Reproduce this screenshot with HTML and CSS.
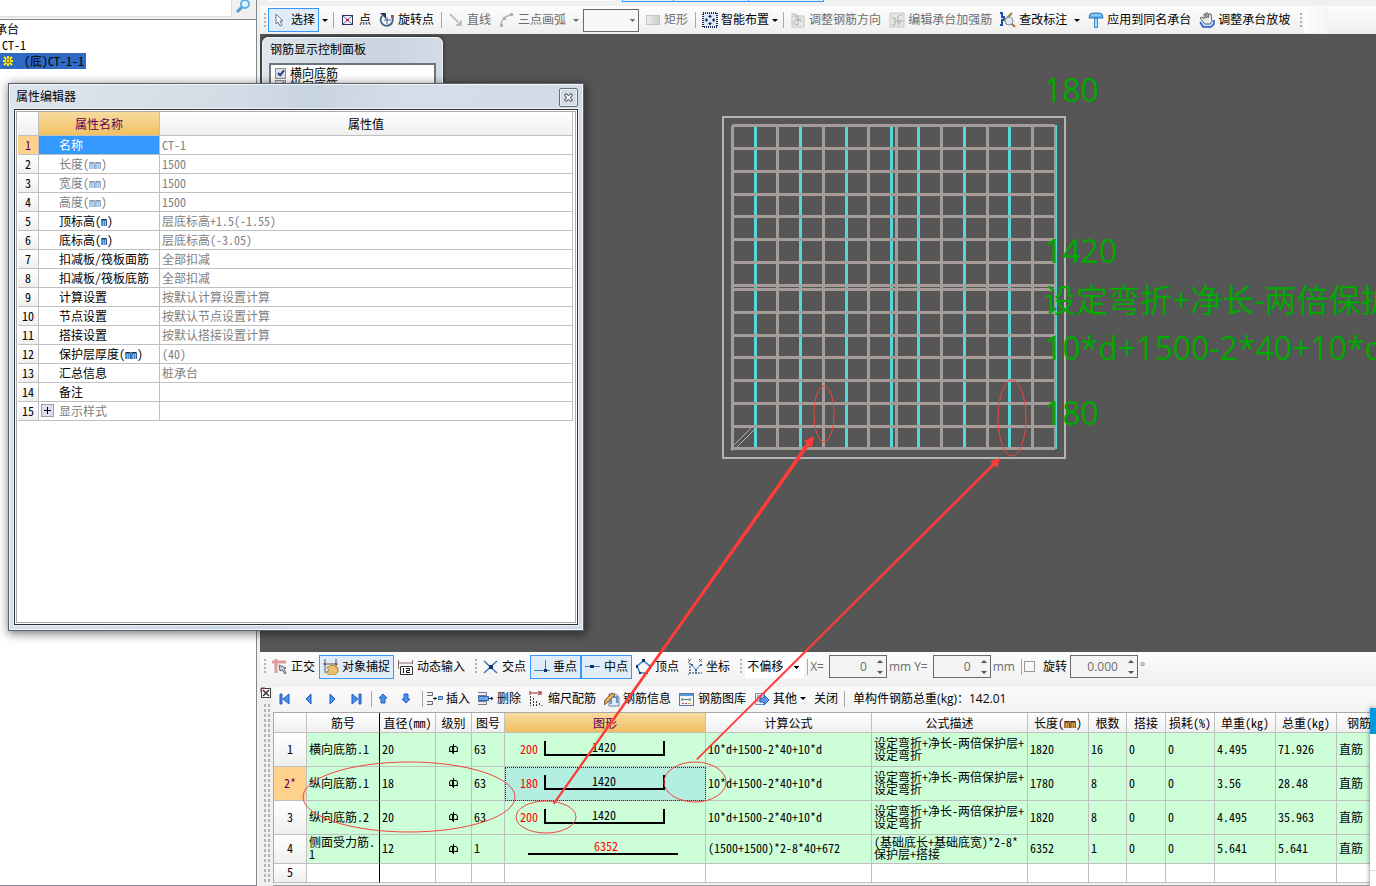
FILE: index.html
```html
<!DOCTYPE html>
<html lang="zh-CN">
<head>
    <meta charset="UTF-8">
    <title>承台钢筋</title>
    <link rel="stylesheet" href="styles.css">
</head>
<body>
<aside class="sidebar">
    <div class="search">
        <input type="text" aria-label="搜索构件">
        <button type="button" aria-label="搜索">
            <svg width="16" height="16" viewBox="0 0 16 16"><path d="M6 9L1 14" stroke="#4f9ad8" stroke-width="3"/><circle cx="9" cy="6" r="4" fill="#e4f6ff" stroke="#5cb4e8" stroke-width="2"/></svg>
        </button>
    </div>
    <ul class="tree">
        <li class="root">承台</li>
        <li>CT-1</li>
        <li class="current">
            <svg width="12" height="12" viewBox="0 0 12 12"><path d="M6 1v10M1 6h10M2 2l8 8M10 2l-8 8" stroke="#ffee00" stroke-width="2"/><circle cx="6" cy="6" r="3" fill="#ffee00"/><circle cx="6" cy="6" r="2" fill="none" stroke="#555" stroke-width="1"/></svg>
            <span>(底)CT-1-1</span>
        </li>
    </ul>
</aside>

<main class="main">
    <div class="strip"><i></i><i></i><i></i></div>
    <!-- 绘图工具栏 -->
    <div class="bar">
        <span class="grip"></span>
        <button class="tool on"><svg width="16" height="16" viewBox="0 0 16 16"><path d="M4 2v10l2-2 2 4 2-1-2-4h3z" fill="#fff" stroke="#6a7684"/></svg>选择</button>
        <button class="arrow" aria-label="选择方式"></button>
        <span class="sep"></span>
        <button class="tool"><svg width="16" height="16" viewBox="0 0 16 16"><rect x="2.500" y="3.500" width="10" height="9" fill="#eef4ff" stroke="#26365e"/><path d="M3 4l9 8M12 4l-9 8" stroke="#5570b0"/><path d="M6 8h3M7.500 7v2" stroke="#e02030" stroke-width="2"/></svg>点</button>
        <button class="tool"><svg width="16" height="16" viewBox="0 0 16 16"><path d="M3 4a6 6 0 1 0 10 1" fill="none" stroke="#45688c" stroke-width="2"/><path d="M1 1h6v6z" fill="#1c3e68"/><path d="M8 5v7M5 8h7" stroke="#3c6290"/><path d="M12 3h3v3h-3z" fill="#b0525c"/></svg>旋转点</button>
        <span class="sep"></span>
        <button class="tool off"><svg width="16" height="16" viewBox="0 0 16 16"><path d="M2 2l11 11M13 8v5H8" fill="none" stroke="#b4b4b4" stroke-width="1.500"/></svg>直线</button>
        <button class="tool off"><svg width="16" height="16" viewBox="0 0 16 16"><path d="M2 14Q2 4 13 3" fill="none" stroke="#b4b4b4" stroke-width="1.500"/><path d="M1 12h3v3H1zM4 5h3v3H4zM11 1h3v3h-3z" fill="#b0b0b0"/></svg>三点画弧</button>
        <button class="arrow off" aria-label="画弧方式"></button>
        <select class="combo" aria-label="半径"><option></option></select>
        <button class="tool off"><svg width="16" height="16" viewBox="0 0 16 16"><defs><linearGradient id="g1"><stop offset="0" stop-color="#eee"/><stop offset="1" stop-color="#ccc"/></linearGradient></defs><rect x="1.500" y="3.500" width="13" height="9" fill="url(#g1)" stroke="#c4c4c4"/></svg>矩形</button>
        <span class="sep"></span>
        <button class="tool menu"><svg width="16" height="16" viewBox="0 0 16 16"><rect x="1" y="1" width="14" height="14" fill="#dbe8fa" stroke="#1a2a50" stroke-width="2" stroke-dasharray="1 1"/><path d="M8 3v3M8 10v3M3 8h3M10 8h3" stroke="#102040"/><path d="M6 5h4L8 3zM6 11h4l-2 2zM5 6v4L3 8zM11 6v4l2-2z" fill="#102040"/></svg>智能布置</button>
        <button class="arrow" aria-label="布置方式"></button>
        <span class="sep"></span>
        <button class="tool off"><svg width="16" height="16" viewBox="0 0 16 16"><path d="M2 4h12v11H2z" fill="#e8e8e8" stroke="#c4c4c4"/><path d="M1 2h5v4q0 2 5 1M8 3v10q-4 0-4-3 0-2 4-2t4 2" fill="none" stroke="#b0b0b0"/></svg>调整钢筋方向</button>
        <button class="tool off"><svg width="16" height="16" viewBox="0 0 16 16"><path d="M1 1h14v14H1z" fill="#e6e6e6" stroke="#c8c8c8"/><path d="M3 6h3v7H3M6 9h8M9 13V5q0-2 4-2M11 9v4" fill="none" stroke="#b0b0b0"/></svg>编辑承台加强筋</button>
        <button class="tool"><svg width="16" height="16" viewBox="0 0 16 16"><path d="M0 1h2v4h2v3H2v5H0" fill="none" stroke="#1a50b0" stroke-width="2"/><path d="M12 1L4 9" stroke="#a08030" stroke-width="2"/><circle cx="9" cy="9" r="4" fill="#d8ecf8" stroke="#888"/><path d="M12 12l3 3" stroke="#c06828" stroke-width="2"/></svg>查改标注</button>
        <button class="arrow" aria-label="标注方式"></button>
        <span class="gap"></span>
        <button class="tool"><svg width="16" height="16" viewBox="0 0 16 16"><path d="M2 2q0-1 6-1t6 1l1 4H1z" fill="#62b4ec" stroke="#2878bc"/><path d="M3 3h10" stroke="#b4e0ff"/><path d="M6.500 6.500h3v9h-3z" fill="#a8dcf8" stroke="#3888c4"/></svg>应用到同名承台</button>
        <button class="tool"><svg width="16" height="16" viewBox="0 0 16 16"><path d="M1 10l3 5h8l3-3V8" fill="#c0d8ff" stroke="#2458c0" stroke-width="1.500"/><path d="M5 11L1 6l2-1 2 2V2h2v4-5h2v5l1-4h2l1 7-2 3H6z" fill="#ececec" stroke="#666"/></svg>调整承台放坡</button>
        <span class="grip"></span>
        <span class="bar-end"></span>
    </div>

    <!-- 绘图区 -->
    <div class="canvas">
        <svg class="drawing" width="1116" height="618" viewBox="260 34 1116 618">
            <rect class="outline" x="723" y="117" width="342" height="341"/>
            <path class="bar-x" d="M755.500 126v321M800.500 126v321M846.500 126v321M891.500 126v321M918.500 126v321M964.500 126v321M1009.500 126v321"/>
            <path class="bar-x thin" d="M1056.500 125v324"/>
            <path class="bar-y" d="M732.500 126v324M777.500 126v322M823.500 126v322M868.500 126v322M896.500 126v322M941.500 126v322M987.500 126v322M1032.500 126v322"/>
            <path class="bar-y end" d="M1055 125v324"/>
            <path class="bar-y" d="M732 125.500h323M732 148.500h323M732 171.500h323M732 194.500h323M732 216.500h323M732 239.500h323M732 262.500h323M732 285.500h323M732 289.500h323M732 312.500h323M732 335.500h323M732 357.500h323M732 380.500h323M732 403.500h323M732 426.500h323M731 448.500h324"/>
            <path class="hook" d="M733 446l18-18M737 447l18-18M732 445v6"/>
            <g class="dims">
                <text x="1044" y="102">180</text>
                <text x="1044" y="263">1420</text>
                <text x="1044" y="312">设定弯折+净长-两倍保护层+设定弯折</text>
                <text x="1044" y="360">10*d+1500-2*40+10*d</text>
                <text x="1044" y="425">180</text>
            </g>
        </svg>
        <section class="panel">
            <h2>钢筋显示控制面板</h2>
            <div class="panel-list">
                <label><input type="checkbox" checked>横向底筋</label>
                <label><input type="checkbox" checked>纵向底筋</label>
            </div>
        </section>
    </div>

    <!-- 捕捉工具栏 -->
    <div class="bar snap">
        <span class="grip"></span>
        <button class="tool"><svg width="16" height="16" viewBox="0 0 16 16"><path d="M0 3h14M4 0v14" stroke="#dc9c9c" stroke-width="3"/><path d="M7 6l1 6 2-1 3 4 1-1-2-4 2-1z" fill="#c8d0d8" stroke="#5a6a7c"/></svg>正交</button>
        <button class="tool on"><svg width="16" height="16" viewBox="0 0 16 16"><path d="M2 0v14M13 0v9M0 5h15" stroke="#555"/><path d="M1 4l2 2M12 4l2 2" stroke="#d02020"/><path d="M4 8l6-2 5 3v4l-4 3H6l-3-3 3-1z" fill="#e8c070" stroke="#b08838"/></svg>对象捕捉</button>
        <button class="tool"><svg width="16" height="16" viewBox="0 0 16 16"><path d="M0 4h15M.5 1v9M14.500 1v4" stroke="#8a6a6a" fill="none"/><path d="M2.500 7.500h12v8h-12z" fill="#fff" stroke="#333"/><path d="M5.500 9v5M8 9.500h3.500v2h-3v2H12" fill="none" stroke="#111"/></svg>动态输入</button>
        <span class="grip"></span>
        <button class="tool"><svg width="16" height="16" viewBox="0 0 16 16"><path d="M1 2l13 12M14 2L1 14" stroke="#3a78b4" stroke-width="1.500"/><path d="M6 6h4v4H6z" fill="#103468"/></svg>交点</button>
        <button class="tool on"><svg width="16" height="16" viewBox="0 0 16 16"><path d="M0 11.500h16M11.500 1v11" stroke="#3a80c4"/><path d="M10 10h3v3h-3z" fill="#103468"/></svg>垂点</button>
        <button class="tool on"><svg width="16" height="16" viewBox="0 0 16 16"><path d="M0 7.500h15" stroke="#3a80c4"/><path d="M5 6h4v3H5z" fill="#103468"/></svg>中点</button>
        <button class="tool"><svg width="16" height="16" viewBox="0 0 16 16"><path d="M7.500 2L14 7l-3 7H4L1 7z" fill="none" stroke="#3a80c4" stroke-width="1.500"/><path d="M6 0h3v3H6zM0 6h2v3H0zM13 6h2v3h-2zM3 13h2v2H3zM10 13h2v2h-2z" fill="#103468"/></svg>顶点</button>
        <button class="tool"><svg width="16" height="16" viewBox="0 0 16 16"><path d="M3 14l-2 2M5 6l4 5 5-6M9 11v4" fill="none" stroke="#3a80c4"/><path d="M3 4v10h12" fill="none" stroke="#234" stroke-dasharray="2 1"/><path d="M1 0l2 2M4 0L1 4M12 0l3 3M15 0l-3 3" stroke="#567"/><path d="M8 10h2v2H8zM4 5h2v2H4zM13 5h2v2h-2z" fill="#2468a8"/></svg>坐标</button>
        <span class="grip"></span>
        <select class="offset" aria-label="偏移方式"><option>不偏移</option></select>
        <span class="sep"></span>
        <label class="num">X=<span class="spin"><input type="text" value="0"><i></i></span>mm</label>
        <label class="num">Y=<span class="spin"><input type="text" value="0"><i></i></span>mm</label>
        <span class="sep"></span>
        <label class="rotate"><input type="checkbox">旋转</label>
        <span class="spin wide"><input type="text" value="0.000" aria-label="旋转角度"><i></i></span>
        <span class="degree">°</span>
    </div>

    <!-- 编辑钢筋 -->
    <div class="rebar">
        <div class="dock">
            <button type="button" aria-label="关闭停靠窗口"><svg width="12" height="12" viewBox="0 0 12 12"><rect x="1.500" y="1.500" width="9" height="9" fill="#fff" stroke="#444"/><path d="M3 3l6 6M9 3L3 9" stroke="#333" stroke-width="1.500"/><path d="M1 1h4M1 1v4" stroke="#a03030"/></svg></button>
            <div class="dots"></div>
        </div>
        <div class="rebar-body">
            <div class="bar edit">
                <button class="tool" aria-label="首行"><svg width="16" height="16" viewBox="0 0 16 16"><path d="M3 3h2v10H3zM12 3v10L6 8z" fill="#4c90ee" stroke="#1e5cc8"/></svg></button>
                <button class="tool" aria-label="上一行"><svg width="16" height="16" viewBox="0 0 16 16"><path d="M10 3v10L5 8z" fill="#4c90ee" stroke="#1e5cc8"/></svg></button>
                <button class="tool" aria-label="下一行"><svg width="16" height="16" viewBox="0 0 16 16"><path d="M5 3v10l5-5z" fill="#4c90ee" stroke="#1e5cc8"/></svg></button>
                <button class="tool" aria-label="末行"><svg width="16" height="16" viewBox="0 0 16 16"><path d="M10 3h2v10h-2zM3 3v10l6-5z" fill="#4c90ee" stroke="#1e5cc8"/></svg></button>
                <span class="sep"></span>
                <button class="tool" aria-label="上移"><svg width="16" height="16" viewBox="0 0 16 16"><path d="M7 3l4 4H9v5H5V7H3z" fill="#4c90ee" stroke="#1e5cc8"/></svg></button>
                <button class="tool" aria-label="下移"><svg width="16" height="16" viewBox="0 0 16 16"><path d="M6 12l4-4H8V3H4v5H2z" fill="#4c90ee" stroke="#1e5cc8"/></svg></button>
                <span class="sep"></span>
                <button class="tool"><svg width="16" height="16" viewBox="0 0 16 16"><path d="M0 1.500h5.500v3H0M0 10.500h5.500v3H0" fill="#eaf0f6" stroke="#667"/><path d="M6 7.500h4M8 6v3" stroke="#222"/><path d="M11.500 5.500h4v3h-4z" fill="#9cc4f4" stroke="#3a68a8"/></svg>插入</button>
                <button class="tool"><svg width="16" height="16" viewBox="0 0 16 16"><path d="M0 1.500h8.500v3H0M0 10.500h8.500v3H0" fill="#eaf0f6" stroke="#778"/><path d="M.5 5.500h10v4H.5z" fill="#6aa8ec" stroke="#3a68a8"/><path d="M11 7.500h4M13 6l2 1.500L13 9" stroke="#222" fill="none"/></svg>删除</button>
                <button class="tool"><svg width="16" height="16" viewBox="0 0 16 16"><path d="M1 2h11" stroke="#a02828"/><path d="M1 0v4M12 0v4M9 0l3 2-3 2" stroke="#a02828" fill="none"/><path d="M1.500 5v10M4.500 7v8M7.500 10v5M10.500 12v3M13 14v1" stroke="#334" stroke-dasharray="2 1"/></svg>缩尺配筋</button>
                <button class="tool"><svg width="16" height="16" viewBox="0 0 16 16"><path d="M5 3h7l3 3v9H5z" fill="#dceafa" stroke="#6884a8"/><path d="M7 13V6M9 6h4v6" fill="none" stroke="#4878b0" stroke-width="1.500"/><path d="M0 14L1 9l7-7 3 2-7 7z" fill="#e0b060" stroke="#7a5a30"/></svg>钢筋信息</button>
                <button class="tool"><svg width="16" height="16" viewBox="0 0 16 16"><rect x=".5" y="2.500" width="14" height="12" fill="#eef4fb" stroke="#5a7898"/><path d="M1 4h13" stroke="#5898e0" stroke-width="2"/><path d="M3 10V7M3 8.500h8M11 7v3" fill="none" stroke="#777"/><path d="M3 12.500h2M6 12.500h2" stroke="#d04040"/><path d="M9 12.500h3" stroke="#d0b030"/></svg>钢筋图库</button>
                <button class="tool menu"><svg width="16" height="16" viewBox="0 0 16 16"><path d="M1.500 2.500h9v11h-9z" fill="#e8f0fa" stroke="#7890b0"/><path d="M3 5h5M3 7h3M3 10h3" stroke="#778"/><path d="M6 7h4V4l5 5-5 5v-3H6z" fill="#5a98ec" stroke="#2458b0"/></svg>其他</button>
                <button class="arrow" aria-label="其他操作"></button>
                <button class="tool">关闭</button>
                <span class="sep"></span>
                <span class="total">单构件钢筋总重(kg)：142.01</span>
            </div>
            <table class="grid bars">
                <colgroup>
                    <col class="c-no"><col class="c-name"><col class="c-dia"><col class="c-level"><col class="c-fig"><col class="c-shape"><col class="c-formula"><col class="c-desc"><col class="c-wide"><col class="c-count"><col class="c-lap"><col class="c-loss"><col class="c-wide"><col class="c-wide"><col>
                </colgroup>
                <thead>
                <tr><th></th><th>筋号</th><th>直径(mm)</th><th>级别</th><th>图号</th><th class="hot">图形</th><th>计算公式</th><th>公式描述</th><th>长度(mm)</th><th>根数</th><th>搭接</th><th>损耗(%)</th><th>单重(kg)</th><th>总重(kg)</th><th class="last">钢筋</th></tr>
                </thead>
                <tbody>
                <tr>
                    <th>1</th><td>横向底筋.1</td><td>20</td>
                    <td class="level"><svg width="11" height="11" viewBox="0 0 11 11"><path d="M5.500 0v10M1 7.500h9M5 2.500H3q-1.500 0-1.500 2.500T3 7.500M6 2.500h2q1.500 0 1.500 2.500T8 7.500M4.500 9V2" fill="none" stroke="#000"/></svg></td>
                    <td>63</td>
                    <td class="shape"><svg width="200" height="33" viewBox="0 0 200 33"><path d="M40 8v14h119V8"/><text class="red" x="15" y="21">200</text><text x="87" y="19">1420</text></svg></td>
                    <td>10*d+1500-2*40+10*d</td><td>设定弯折+净长-两倍保护层+<br>设定弯折</td><td>1820</td><td>16</td><td>0</td><td>0</td><td>4.495</td><td>71.926</td><td>直筋</td>
                </tr>
                <tr>
                    <th class="hot">2*</th><td>纵向底筋.1</td><td>18</td>
                    <td class="level"><svg width="11" height="11" viewBox="0 0 11 11"><path d="M5.500 0v10M1 7.500h9M5 2.500H3q-1.500 0-1.500 2.500T3 7.500M6 2.500h2q1.500 0 1.500 2.500T8 7.500M4.500 9V2" fill="none" stroke="#000"/></svg></td>
                    <td>63</td>
                    <td class="shape picked"><svg width="200" height="33" viewBox="0 0 200 33"><path d="M40 8v14h119V8"/><text class="red" x="15" y="21">180</text><text x="87" y="19">1420</text></svg></td>
                    <td>10*d+1500-2*40+10*d</td><td>设定弯折+净长-两倍保护层+<br>设定弯折</td><td>1780</td><td>8</td><td>0</td><td>0</td><td>3.56</td><td>28.48</td><td>直筋</td>
                </tr>
                <tr>
                    <th>3</th><td>纵向底筋.2</td><td>20</td>
                    <td class="level"><svg width="11" height="11" viewBox="0 0 11 11"><path d="M5.500 0v10M1 7.500h9M5 2.500H3q-1.500 0-1.500 2.500T3 7.500M6 2.500h2q1.500 0 1.500 2.500T8 7.500M4.500 9V2" fill="none" stroke="#000"/></svg></td>
                    <td>63</td>
                    <td class="shape"><svg width="200" height="33" viewBox="0 0 200 33"><path d="M40 8v14h119V8"/><text class="red" x="15" y="21">200</text><text x="87" y="19">1420</text></svg></td>
                    <td>10*d+1500-2*40+10*d</td><td>设定弯折+净长-两倍保护层+<br>设定弯折</td><td>1820</td><td>8</td><td>0</td><td>0</td><td>4.495</td><td>35.963</td><td>直筋</td>
                </tr>
                <tr class="short">
                    <th>4</th><td>侧面受力筋.<br>1</td><td>12</td>
                    <td class="level"><svg width="11" height="11" viewBox="0 0 11 11"><path d="M5.500 0v10M1 7.500h9M5 2.500H3q-1.500 0-1.500 2.500T3 7.500M6 2.500h2q1.500 0 1.500 2.500T8 7.500M4.500 9V2" fill="none" stroke="#000"/></svg></td>
                    <td>1</td>
                    <td class="shape"><svg width="200" height="28" viewBox="0 0 200 28"><path d="M23 19h150"/><text class="red" x="89" y="16">6352</text></svg></td>
                    <td>(1500+1500)*2-8*40+672</td><td>(基础底长+基础底宽)*2-8*<br>保护层+搭接</td><td>6352</td><td>1</td><td>0</td><td>0</td><td>5.641</td><td>5.641</td><td>直筋</td>
                </tr>
                <tr class="blank"><th>5</th><td></td><td></td><td></td><td></td><td></td><td></td><td></td><td></td><td></td><td></td><td></td><td></td><td></td><td></td></tr>
                </tbody>
            </table>
        </div>
    </div>
</main>

<!-- 属性编辑器 -->
<section class="dialog">
    <header>
        <h2>属性编辑器</h2>
        <button type="button" aria-label="关闭"><svg width="9" height="9" viewBox="0 0 9 9"><path d="M1 1h2l1.500 2L6 1h2v2L6 4.500 8 6v2H6L4.500 6 3 8H1V6l2-1.500L1 3z" fill="#fff" stroke="#444a58"/></svg></button>
    </header>
    <div class="dialog-body">
        <table class="grid props">
            <colgroup><col class="p-no"><col class="p-name"><col></colgroup>
            <thead>
            <tr><th></th><th class="hot">属性名称</th><th>属性值</th></tr>
            </thead>
            <tbody>
            <tr><th class="hot">1</th><td class="picked">名称</td><td>CT-1</td></tr>
            <tr><th>2</th><td class="gray">长度(mm)</td><td>1500</td></tr>
            <tr><th>3</th><td class="gray">宽度(mm)</td><td>1500</td></tr>
            <tr><th>4</th><td class="gray">高度(mm)</td><td>1500</td></tr>
            <tr><th>5</th><td>顶标高(m)</td><td>层底标高+1.5(-1.55)</td></tr>
            <tr><th>6</th><td>底标高(m)</td><td>层底标高(-3.05)</td></tr>
            <tr><th>7</th><td>扣减板/筏板面筋</td><td>全部扣减</td></tr>
            <tr><th>8</th><td>扣减板/筏板底筋</td><td>全部扣减</td></tr>
            <tr><th>9</th><td>计算设置</td><td>按默认计算设置计算</td></tr>
            <tr><th>10</th><td>节点设置</td><td>按默认节点设置计算</td></tr>
            <tr><th>11</th><td>搭接设置</td><td>按默认搭接设置计算</td></tr>
            <tr><th>12</th><td>保护层厚度(mm)</td><td>(40)</td></tr>
            <tr><th>13</th><td>汇总信息</td><td>桩承台</td></tr>
            <tr><th>14</th><td>备注</td><td></td></tr>
            <tr><th>15</th><td class="gray fold"><div><button type="button" aria-label="展开"><svg width="11" height="11" viewBox="0 0 11 11"><path d="M2 5.500h7M5.500 2v7" stroke="#000"/></svg></button>显示样式</div></td><td></td></tr>
            </tbody>
        </table>
    </div>
</section>

<div class="side-tab"></div>

<!-- 红色标注 -->
<svg class="marks" width="1376" height="886" viewBox="0 0 1376 886">
    <g class="rings">
        <ellipse cx="824" cy="414" rx="10" ry="28"/>
        <ellipse cx="1012" cy="418" rx="14" ry="38"/>
        <ellipse cx="409" cy="797" rx="106" ry="35"/>
        <ellipse cx="546" cy="817" rx="30" ry="16"/>
        <ellipse cx="695" cy="782" rx="31" ry="20"/>
    </g>
    <path d="M553 803L806.500 443L804 441L814 436L812 448L809 446L554.500 804.500z"/>
    <path d="M696 759L992.500 463.500L990 461L1000 458L997 468L994.500 465.500L697.500 760z"/>
</svg>
</body>
</html>
```
FILE: styles.css
```css
* {
    margin: 0;
    padding: 0;
    box-sizing: border-box;
}
body{
    display: flex;
    height: 100vh;
    overflow: hidden;
    background-color: #f0f0f0;
    font: 12px/16px "Open Sans", "Noto Sans CJK SC", sans-serif;
    color: #000;
}
button, input, select{
    font: inherit;
    color: inherit;
    border: 0;
    background: none;
    appearance: none;
}
svg{
    display: block;
    flex: none;
}
h2{
    font-size: 12px;
    font-weight: normal;
}

/* 左侧构件树 */
.sidebar{
    width: 257px;
    flex: none;
    display: flex;
    flex-direction: column;
    border-right: 1px solid #828790;
    border-bottom: 1px solid #828790;
}
.search{
    display: flex;
    height: 19px;
    padding-bottom: 2px;
}
.search input{
    flex: 1;
    min-width: 0;
    background-color: #fff;
    border-right: 1px solid #ddd;
    border-bottom: 1px solid #ddd;
}
.search button{
    width: 24px;
    padding-left: 4px;
    overflow: hidden;
}
.search svg{
    margin-top: -5px;
}
.tree{
    flex: 1;
    padding-top: 1px;
    background-color: #fff;
    border-top: 1px solid #828790;
    list-style: none;
    font-family: "Noto Sans Mono CJK SC", "Noto Sans CJK SC", sans-serif;
}
.tree li{
    height: 16px;
    padding-left: 2px;
}
.tree .root{
    text-indent: -7px;
}
.tree .current{
    display: flex;
    align-items: center;
    gap: 10px;
    width: 86px;
    background-color: #316ac5;
}

/* 工具栏 */
.main{
    flex: 1;
    min-width: 0;
    margin-left: 3px;
    display: flex;
    flex-direction: column;
}
.strip{
    display: flex;
    height: 6px;
    padding-left: 362px;
    background: linear-gradient(#fff, #fff) no-repeat 8px 0 / 346px 1px;
}
.strip i{
    width: 76px;
    height: 2px;
    margin-right: -1px;
    border: 1px solid #3399ff;
    border-top: 0;
    background-color: #e5effa;
}
.strip i:first-child{
    width: 52px;
}
.bar{
    display: flex;
    align-items: center;
    height: 28px;
    flex: none;
    white-space: nowrap;
    background: linear-gradient(#fdfdfd, #efefef);
}
.tool{
    display: flex;
    align-items: center;
    gap: 3px;
    height: 24px;
    padding: 0 4px;
    flex: none;
}
.tool.menu{
    padding-right: 0;
}
.tool.on{
    padding: 0 3px;
    border: 1px solid #3399ff;
    background-color: #e1ecf9;
}
.off{
    color: #6d6d6d;
}
.arrow{
    width: 11px;
    height: 20px;
    flex: none;
}
.arrow::before{
    content: "";
    display: block;
    margin: 0 auto;
    width: 0;
    border: 3px solid transparent;
    border-top-color: currentColor;
    border-bottom: 0;
}
.gap{
    width: 2px;
}
.sep{
    width: 1px;
    height: 16px;
    margin: 0 2px 0 3px;
    flex: none;
    background-color: #a8a8a8;
}
.grip{
    width: 10px;
    height: 15px;
    flex: none;
    background: repeating-linear-gradient(#b0b0b0 0 2px, transparent 2px 4px) no-repeat 6px 0 / 2px 15px;
}
.grip:first-child{
    width: 8px;
    background-position: 4px 0;
}
.bar-end{
    width: 24px;
    height: 26px;
    background: linear-gradient(90deg, #fefefe, #f4f4f4);
}
.combo{
    width: 56px;
    height: 23px;
    margin: 0 2px;
    border: 1px solid #6a6a6a;
    background: linear-gradient(#777, #777) no-repeat 46px 9px / 5px 1px, linear-gradient(#777, #777) no-repeat 47px 10px / 3px 1px, linear-gradient(#777, #777) no-repeat 48px 11px / 1px 1px, #f7f7f7;
}

/* 绘图区 */
.canvas{
    position: relative;
    flex: 1;
    min-height: 0;
    overflow: hidden;
    background-color: #565656;
}
.drawing{
    position: absolute;
    left: 0;
    top: 0;
}
.outline{
    fill: none;
    stroke: #b4b4b4;
    stroke-width: 2;
}
.bar-x{
    stroke: #52d8d8;
    stroke-width: 3;
}
.bar-y{
    stroke: #a49c98;
    stroke-width: 3;
}
.end{
    stroke-width: 2;
}
.thin{
    stroke-width: 1;
}
.hook{
    stroke: #b4aca8;
    stroke-width: 1;
}
.dims{
    fill: #00a800;
    font-size: 32px;
}
.panel{
    position: absolute;
    left: 2px;
    top: 3px;
    width: 181px;
    height: 120px;
    padding: 4px 6px;
    border: 1px solid #f4f7fa;
    border-radius: 6px 6px 0 0;
    background: linear-gradient(100deg, #dfe6ee, #c9d4df 60%, #d6dee8);
    box-shadow: 0 0 3px 1px #333;
}
.panel h2{
    height: 21px;
    padding-left: 1px;
}
.panel-list{
    height: 90px;
    padding: 2px 4px;
    border: 2px solid #70747c;
    background-color: #fff;
}
.panel-list label{
    display: flex;
    align-items: center;
    gap: 4px;
    height: 12px;
    font-family: "Noto Sans CJK SC", sans-serif;
}
.panel-list input{
    width: 11px;
    height: 11px;
    border: 1px solid #8e8f8f;
    background-color: #dde3ec;
}
.panel-list input:checked::before{
    content: "";
    display: block;
    width: 2px;
    height: 5px;
    margin: 0 auto;
    border: solid #304080;
    border-width: 0 2px 2px 0;
    transform: rotate(40deg);
}

/* 捕捉 */
.snap{
    height: 35px;
    padding-bottom: 6px;
    background: linear-gradient(#fcfcfc, #f0f0f0);
}
.offset{
    width: 59px;
    height: 22px;
    margin-left: 1px;
    padding-left: 2px;
    background: linear-gradient(#000, #000) no-repeat 49px 10px / 5px 1px, linear-gradient(#000, #000) no-repeat 50px 11px / 3px 1px, linear-gradient(#000, #000) no-repeat 51px 12px / 1px 1px, #fff;
}
.num{
    display: flex;
    align-items: center;
    gap: 2px;
    margin-right: 3px;
    color: #6d6d6d;
}
.spin{
    display: flex;
    align-items: center;
    width: 58px;
    height: 23px;
    margin-left: 3px;
    padding-right: 3px;
    border: 1px solid #6a6a6a;
    background-color: #f4f4f4;
    color: #6d6d6d;
}
.spin input{
    flex: 1;
    min-width: 0;
    padding-right: 10px;
    text-align: right;
}
.spin i{
    display: flex;
    flex-direction: column;
    gap: 8px;
}
.spin i::before, .spin i::after{
    content: "";
    border: 3px solid transparent;
    border-top: 0;
    border-bottom-color: #555;
}
.spin i::after{
    border-top: 3px solid #555;
    border-bottom: 0;
}
.spin.wide{
    width: 68px;
    margin-left: 3px;
}
.degree{
    padding-left: 2px;
    color: #6d6d6d;
}
.rotate{
    display: flex;
    align-items: center;
    gap: 8px;
}
.rotate input{
    width: 11px;
    height: 11px;
    border: 1px solid #9a9a9a;
    background-color: #f8f8f8;
}

/* 钢筋表 */
.rebar{
    display: flex;
    height: 199px;
    flex: none;
}
.dock{
    width: 13px;
    flex: none;
    display: flex;
    flex-direction: column;
}
.dots{
    flex: 1;
    width: 8px;
    margin: 3px 0 3px 2px;
    background: conic-gradient(transparent 25%, #b4b4b4 0 50%, transparent 0) 0 0 / 4px 5px;
}
.rebar-body{
    flex: 1;
    min-width: 0;
    border-bottom: 1px solid #a0a0a0;
}
.edit{
    height: 25px;
    padding-bottom: 2px;
    background: linear-gradient(#fbfbfb, #f2f2f2);
}
.edit .sep{
    margin: 0 0 0 2px;
}
.edit .arrow{
    margin-right: 2px;
}
.edit .total{
    padding-left: 8px;
}
.grid{
    width: 100%;
    table-layout: fixed;
    border-collapse: separate;
    border-spacing: 0;
    font: 12px/12px "Noto Sans Mono CJK SC", "Noto Sans CJK SC", sans-serif;
    background-color: #fff;
}
.grid th, .grid td{
    border-right: 1px solid #c0c0c0;
    border-bottom: 1px solid #c0c0c0;
    white-space: nowrap;
    overflow: hidden;
}
.grid th{
    font-weight: normal;
    text-align: center;
    background: linear-gradient(#fff, #efefef);
}
.grid th.hot{
    background: linear-gradient(#f8dba0, #f0c060);
    color: #600058;
}
.grid tbody th.hot{
    background: #ffd28c;
}
.bars{
    border-top: 1px solid #a8a8a8;
    border-left: 1px solid #a8a8a8;
}
.bars thead tr{
    height: 20px;
}
.bars tbody tr{
    height: 34px;
}
.bars tbody .short{
    height: 29px;
}
.bars tbody .blank{
    height: 19px;
}
.bars tbody th{
    padding: 0 8px 2px 0;
}
.bars td{
    padding: 0 0 2px 2px;
    background-color: #ccffd8;
}
.bars tbody th{
    padding-right: 0;
}
.bars .last{
    padding-left: 6px;
}
.bars .blank td{
    background-color: #fff;
}
.bars tr > :nth-child(2){
    border-right-color: #000;
}
.bars .level{
    padding: 0;
}
.bars .level svg{
    margin: 0 auto;
}
.bars .shape{
    padding: 0;
}
.shape path{
    fill: none;
    stroke: #000;
    stroke-width: 2;
}
.shape .red{
    fill: #f00;
}
.bars .picked{
    background-color: #b4eee0;
    outline: 1px dotted #402040;
    outline-offset: -1px;
}
.c-no{ width: 33px; }
.c-name{ width: 73px; }
.c-dia{ width: 56px; }
.c-level{ width: 36px; }
.c-fig{ width: 33px; }
.c-shape{ width: 201px; }
.c-formula{ width: 166px; }
.c-desc{ width: 156px; }
.c-wide{ width: 61px; }
.c-count{ width: 38px; }
.c-lap{ width: 39px; }
.c-loss{ width: 49px; }

/* 属性编辑器 */
.dialog{
    position: absolute;
    left: 8px;
    top: 83px;
    width: 576px;
    height: 548px;
    display: flex;
    flex-direction: column;
    padding: 0 5px 5px;
    border: 1px solid #59616c;
    background: linear-gradient(100deg, #dde4ec, #d3dce6 35%, #c8d4de 45%, #d6dde8 60%, #d2dae6);
    box-shadow: inset 0 0 0 1px #f2f6fa, 1px 2px 9px 1px rgba(0, 0, 0, .5);
}
.dialog header{
    display: flex;
    justify-content: space-between;
    height: 25px;
    padding-top: 4px;
}
.dialog h2{
    padding: 1px 2px;
}
.dialog header button{
    display: flex;
    align-items: center;
    justify-content: center;
    width: 19px;
    height: 19px;
    border: 1px solid #666c78;
    border-radius: 2px;
    box-shadow: inset 0 0 0 1px #e8eef4;
}
.dialog-body{
    flex: 1;
    padding: 2px 4px 2px 3px;
    border: 1px solid #2c3234;
    outline: 1px solid #eef2f6;
    background-color: #fff;
    box-shadow: inset 0 0 0 1px #fff, inset 0 0 0 2px #aaa;
}
.props tr{
    height: 19px;
}
.props thead tr{
    height: 24px;
}
.props tbody td, .props tbody th{
    padding-bottom: 1px;
}
.props td{
    padding-left: 2px;
    color: #808080;
}
.props td:nth-child(2){
    padding-left: 20px;
    color: #000;
}
.props td.gray:nth-child(2){
    color: #808080;
}
.props td.picked:nth-child(2){
    background-color: #3399ff;
    color: #fff;
}
.props td.fold:nth-child(2){
    padding-left: 2px;
}
.fold div{
    display: flex;
    align-items: center;
    gap: 5px;
}
.fold button{
    width: 13px;
    height: 13px;
    border: 1px solid #a0a0a0;
    background-color: #dde;
}
.p-no{ width: 21px; }
.p-name{ width: 121px; }

/* 右侧浮动条 */
.side-tab{
    position: absolute;
    right: 0;
    top: 708px;
    bottom: 0;
    width: 6px;
    background: linear-gradient(#ddd, #ddd) no-repeat 0 136px / 6px 1px, #fff;
    border-top: 26px solid #0098dc;
    box-shadow: 0 0 5px rgba(0, 0, 0, .5);
}

.marks{
    position: absolute;
    left: 0;
    top: 0;
    pointer-events: none;
    fill: #ff3b38;
}
.rings{
    fill: none;
    stroke: #f04440;
    stroke-width: 1;
}
```
